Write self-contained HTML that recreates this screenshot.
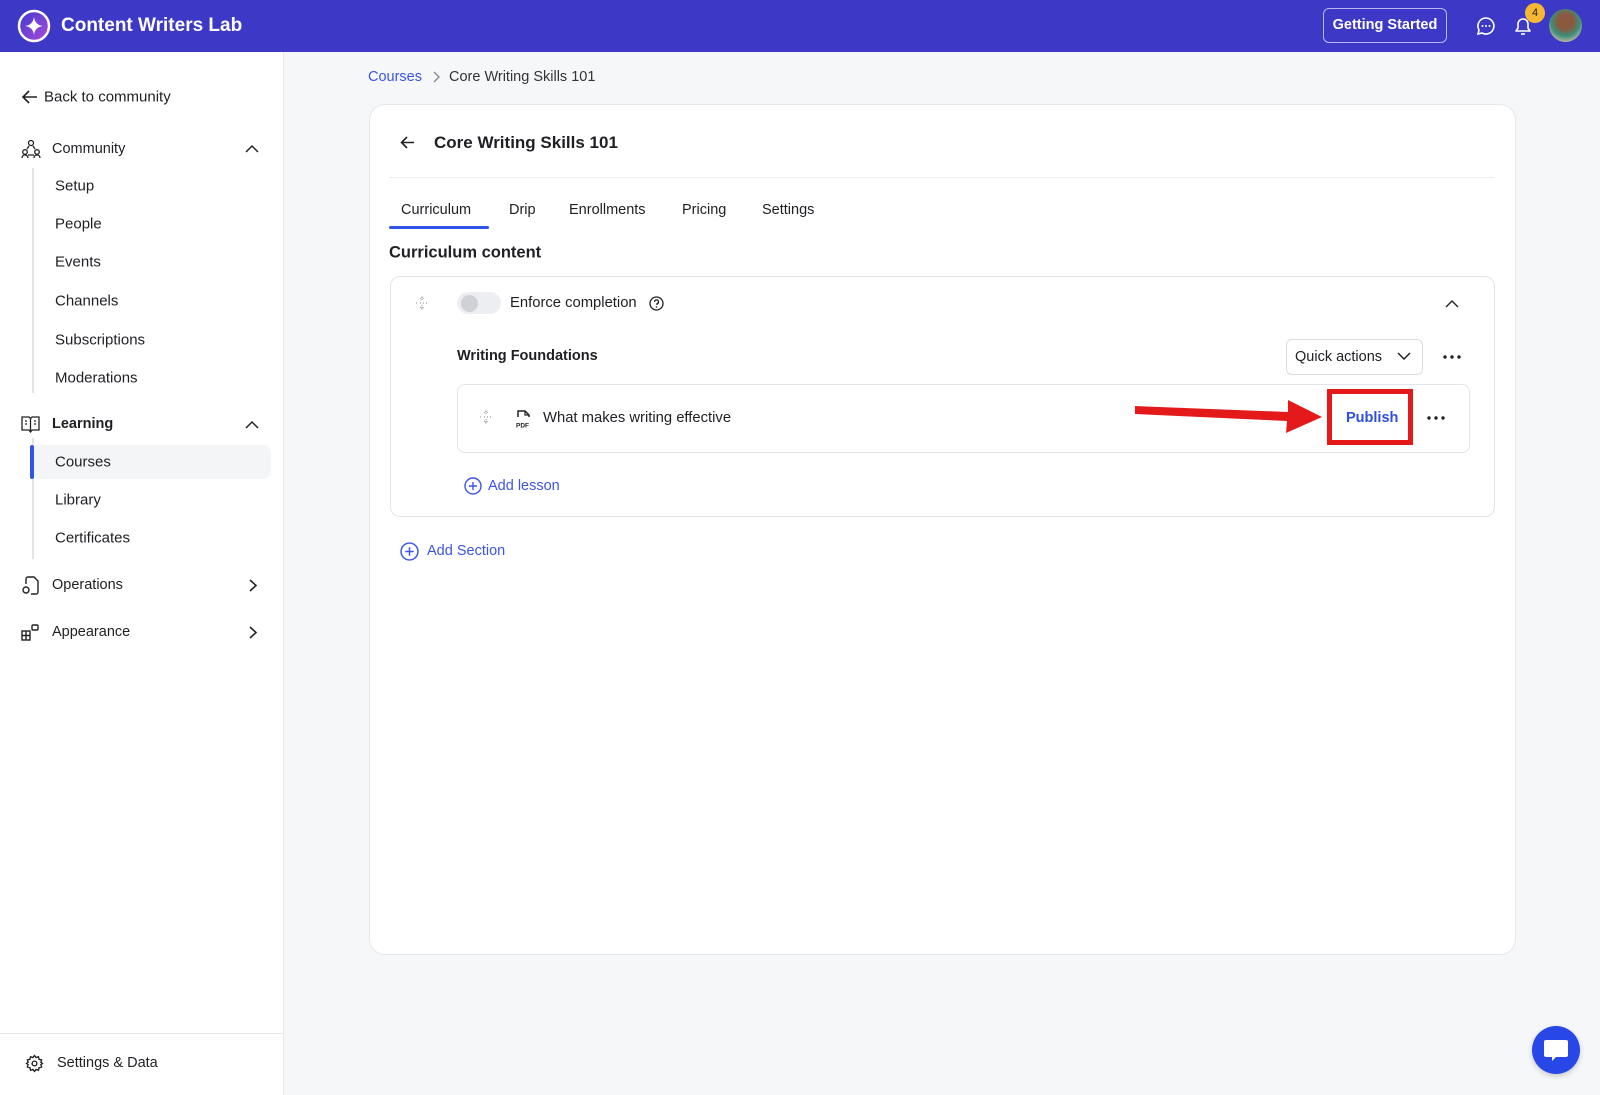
<!DOCTYPE html>
<html><head><meta charset="utf-8"><style>
*{box-sizing:border-box;margin:0;padding:0}
body{width:1600px;height:1095px;background:#f6f7f9;font-family:"Liberation Sans",sans-serif;color:#1f1f24;position:relative;overflow:hidden;font-size:15px}
.a{position:absolute;white-space:nowrap}
.hdr{left:0;top:0;width:1600px;height:52px;background:#3d39c6}
.side{left:0;top:52px;width:284px;height:1043px;background:#fff;border-right:1px solid #e6e7eb}
.t{transform:translateY(-50%)}
.blue{color:#3b55e6}
svg{position:absolute;overflow:visible}
</style></head><body>
<div class="a hdr"></div>
<svg style="left:17px;top:9px" width="34" height="34" viewBox="0 0 34 34"><defs><linearGradient id="g" x1="0" y1="0" x2="1" y2="1"><stop offset="0" stop-color="#3b3ad0"/><stop offset="1" stop-color="#b04ad8"/></linearGradient></defs><circle cx="17" cy="17" r="15" fill="url(#g)" stroke="#fff" stroke-width="2.5"/><path d="M17 8 Q18 16 26 17 Q18 18 17 26 Q16 18 8 17 Q16 16 17 8Z" fill="#fff"/></svg>
<div class="a t" style="left:61px;top:26px;color:#fff;font-size:19px;font-weight:bold">Content Writers Lab</div>
<div class="a" style="left:1323px;top:8px;width:124px;height:35px;border:1px solid #b9b6f0;border-radius:6px;color:#fff;font-size:14.5px;font-weight:bold;text-align:center;line-height:33px">Getting Started</div>
<svg style="left:1476px;top:16px" width="20" height="20" viewBox="0 0 20 20"><path d="M10 2a8 8 0 1 1-4 15l-4 1 1-4A8 8 0 0 1 10 2z" fill="none" stroke="#fff" stroke-width="1.6"/><circle cx="6.5" cy="10" r="1" fill="#fff"/><circle cx="10" cy="10" r="1" fill="#fff"/><circle cx="13.5" cy="10" r="1" fill="#fff"/></svg>
<svg style="left:1513px;top:15px" width="20" height="22" viewBox="0 0 20 22"><path d="M3 16h14l-2-3V9a5 5 0 0 0-10 0v4z" fill="none" stroke="#fff" stroke-width="1.6" stroke-linejoin="round"/><path d="M8 19h4" stroke="#fff" stroke-width="1.6"/></svg>
<div class="a" style="left:1525px;top:3px;width:20px;height:20px;border-radius:50%;background:#f7b733;color:#222;font-size:11px;text-align:center;line-height:20px">4</div>
<div class="a" style="left:1549px;top:9px;width:33px;height:33px;border-radius:50%;background:radial-gradient(circle at 50% 38%,#8a5a40 0 30%,#3a8f7a 55%,#c9b7a3 80%)"></div>

<div class="a side"></div>
<svg style="left:22px;top:90px" width="16" height="14" viewBox="0 0 16 14"><path d="M15 7H2M7 1 1 7l6 6" fill="none" stroke="#222" stroke-width="1.6"/></svg>
<div class="a t" style="left:44px;top:97px">Back to community</div>
<svg style="left:21px;top:139px" width="20" height="20" viewBox="0 0 20 20" fill="none" stroke="#222" stroke-width="1.3"><circle cx="10" cy="4" r="2.5"/><circle cx="4" cy="13" r="2.3"/><circle cx="16" cy="13" r="2.3"/><path d="M1 19c0-2 1.5-3 3-3s3 1 3 3M13 19c0-2 1.5-3 3-3s3 1 3 3M6 10l2-3M14 10l-2-3M7 16h6"/></svg>
<div class="a t" style="left:52px;top:149px;font-size:14.5px">Community</div>
<svg style="left:245px;top:145px" width="14" height="8" viewBox="0 0 14 8"><path d="M1 7l6-6 6 6" fill="none" stroke="#222" stroke-width="1.5"/></svg>
<div class="a" style="left:32px;top:168px;width:2px;height:225px;background:#e3e3e6"></div>
<div class="a t" style="left:55px;top:186px">Setup</div>
<div class="a t" style="left:55px;top:224px">People</div>
<div class="a t" style="left:55px;top:262px">Events</div>
<div class="a t" style="left:55px;top:301px">Channels</div>
<div class="a t" style="left:55px;top:340px">Subscriptions</div>
<div class="a t" style="left:55px;top:378px">Moderations</div>
<svg style="left:21px;top:416px" width="19" height="17" viewBox="0 0 19 17" fill="none" stroke="#222" stroke-width="1.3"><path d="M1 1h7l1.5 1.5L11 1h7v13h-7l-1.5 2L8 14H1z"/><path d="M9.5 2.5V15M4 5h2M4 8h2M13 5h2M13 8h2"/></svg>
<div class="a t" style="left:52px;top:424px;font-weight:bold;font-size:14.5px">Learning</div>
<svg style="left:245px;top:421px" width="14" height="8" viewBox="0 0 14 8"><path d="M1 7l6-6 6 6" fill="none" stroke="#222" stroke-width="1.5"/></svg>
<div class="a" style="left:32px;top:438px;width:2px;height:121px;background:#e3e3e6"></div>
<div class="a" style="left:32px;top:445px;width:239px;height:34px;background:#f4f5f7;border-radius:0 8px 8px 0"></div>
<div class="a" style="left:30px;top:445px;width:4px;height:34px;background:#2f55e8;border-radius:2px"></div>
<div class="a t" style="left:55px;top:462px">Courses</div>
<div class="a t" style="left:55px;top:500px">Library</div>
<div class="a t" style="left:55px;top:538px">Certificates</div>
<svg style="left:21px;top:576px" width="18" height="19" viewBox="0 0 18 19" fill="none" stroke="#222" stroke-width="1.4"><path d="M5 8V3a2 2 0 0 1 2-2h6l4 4v11a2 2 0 0 1-2 2H10"/><circle cx="5" cy="14" r="3"/></svg>
<div class="a t" style="left:52px;top:585px;font-size:14.5px">Operations</div>
<svg style="left:249px;top:579px" width="8" height="13" viewBox="0 0 8 13"><path d="M1 1l6 5.5L1 12" fill="none" stroke="#222" stroke-width="1.6"/></svg>
<svg style="left:21px;top:623px" width="18" height="18" viewBox="0 0 18 18" fill="none" stroke="#222" stroke-width="1.4"><rect x="1" y="8" width="8" height="9"/><path d="M1 12.5h8M5 8v9"/><rect x="11" y="2" width="6" height="5" rx="1"/></svg>
<div class="a t" style="left:52px;top:632px;font-size:14.5px">Appearance</div>
<svg style="left:249px;top:626px" width="8" height="13" viewBox="0 0 8 13"><path d="M1 1l6 5.5L1 12" fill="none" stroke="#222" stroke-width="1.6"/></svg>
<div class="a" style="left:0;top:1033px;width:284px;height:1px;background:#e6e7eb"></div>
<svg style="left:25px;top:1054px" width="19" height="19" viewBox="0 0 24 24" fill="none" stroke="#222" stroke-width="1.7"><circle cx="12" cy="12" r="3"/><path d="M12 2l2 2.5 3-1 .8 3.2 3.2.8-1 3L22 12l-2 1.5 1 3-3.2.8-.8 3.2-3-1L12 22l-2-2.5-3 1-.8-3.2L3 16.5l1-3L2 12l2-1.5-1-3 3.2-.8L7 3.5l3 1z"/></svg>
<div class="a t" style="left:57px;top:1063px;font-size:14.5px">Settings &amp; Data</div>

<div class="a t blue" style="left:368px;top:77px;font-size:14.5px">Courses</div>
<svg style="left:433px;top:71px" width="7" height="12" viewBox="0 0 7 12"><path d="M1 1l5 5-5 5" fill="none" stroke="#888" stroke-width="1.3"/></svg>
<div class="a t" style="left:449px;top:77px;font-size:14.5px;color:#333">Core Writing Skills 101</div>

<div class="a" style="left:369px;top:104px;width:1147px;height:851px;background:#fff;border:1px solid #e6e7eb;border-radius:16px"></div>
<svg style="left:400px;top:136px" width="15" height="13" viewBox="0 0 15 13"><path d="M14 6.5H2M7 1 1.5 6.5 7 12" fill="none" stroke="#222" stroke-width="1.6"/></svg>
<div class="a t" style="left:434px;top:143px;font-size:17px;font-weight:bold">Core Writing Skills 101</div>
<div class="a" style="left:389px;top:177px;width:1106px;height:1px;background:#ececef"></div>
<div class="a t" style="left:401px;top:210px;font-size:14.5px">Curriculum</div>
<div class="a t" style="left:509px;top:210px;font-size:14.5px">Drip</div>
<div class="a t" style="left:569px;top:210px;font-size:14.5px">Enrollments</div>
<div class="a t" style="left:682px;top:210px;font-size:14.5px">Pricing</div>
<div class="a t" style="left:762px;top:210px;font-size:14.5px">Settings</div>
<div class="a" style="left:389px;top:226px;width:100px;height:3px;background:#2f55e8;border-radius:2px"></div>
<div class="a t" style="left:389px;top:253px;font-size:16.5px;font-weight:bold">Curriculum content</div>

<div class="a" style="left:390px;top:276px;width:1105px;height:241px;border:1px solid #e3e4e8;border-radius:10px"></div>
<svg style="left:415px;top:296px" width="14" height="14" viewBox="0 0 14 14" fill="none" stroke="#888" stroke-width="1"><path d="M7 1v4M5 3l2-2 2 2M7 9v4M5 11l2 2 2-2M1 7h2M5 7h1M8 7h1M11 7h2" stroke-dasharray="1 1"/></svg>
<div class="a" style="left:457px;top:292px;width:44px;height:22px;border-radius:11px;background:#eceef2"></div>
<div class="a" style="left:461px;top:295px;width:17px;height:17px;border-radius:50%;background:#cfd1d7"></div>
<div class="a t" style="left:510px;top:303px;font-size:14.8px">Enforce completion</div>
<svg style="left:649px;top:296px" width="15" height="15" viewBox="0 0 15 15"><circle cx="7.5" cy="7.5" r="6.5" fill="none" stroke="#222" stroke-width="1.3"/><path d="M5.5 5.8a2 2 0 1 1 2.5 2V9" fill="none" stroke="#222" stroke-width="1.3"/><circle cx="7.5" cy="11" r=".8" fill="#222"/></svg>
<svg style="left:1445px;top:300px" width="14" height="8" viewBox="0 0 14 8"><path d="M1 7l6-6 6 6" fill="none" stroke="#222" stroke-width="1.4"/></svg>
<div class="a t" style="left:457px;top:356px;font-size:14.5px;font-weight:bold">Writing Foundations</div>
<div class="a" style="left:1286px;top:339px;width:137px;height:36px;border:1px solid #dcdde2;border-radius:6px"></div>
<div class="a t" style="left:1295px;top:357px;font-size:14.5px">Quick actions</div>
<svg style="left:1397px;top:352px" width="14" height="8" viewBox="0 0 14 8"><path d="M1 1l6 6 6-6" fill="none" stroke="#222" stroke-width="1.5"/></svg>
<svg style="left:1443px;top:355px" width="18" height="4" viewBox="0 0 18 4" fill="#222"><circle cx="2" cy="2" r="1.7"/><circle cx="9" cy="2" r="1.7"/><circle cx="16" cy="2" r="1.7"/></svg>
<div class="a" style="left:457px;top:384px;width:1013px;height:69px;border:1px solid #e3e4e8;border-radius:8px"></div>
<svg style="left:479px;top:410px" width="14" height="14" viewBox="0 0 14 14" fill="none" stroke="#888" stroke-width="1"><path d="M7 1v4M5 3l2-2 2 2M7 9v4M5 11l2 2 2-2M1 7h2M5 7h1M8 7h1M11 7h2" stroke-dasharray="1 1"/></svg>
<svg style="left:516px;top:409px" width="16" height="19" viewBox="0 0 16 19"><path d="M2 8V2h7l4 4v2" fill="none" stroke="#222" stroke-width="1.5"/><path d="M9 2v4h4" fill="none" stroke="#222" stroke-width="1.2"/><text x="0" y="18.5" font-size="6.5" font-weight="bold" font-family="Liberation Sans" fill="#222">PDF</text></svg>
<div class="a t" style="left:543px;top:418px;font-size:14.8px">What makes writing effective</div>
<svg style="left:1134px;top:398px" width="192" height="36" viewBox="0 0 192 36"><path d="M1 8 L154 14 L154 2 L188 19 L152 35 L153 23 L1 16Z" fill="#e41a1a"/></svg>
<div class="a" style="left:1327px;top:389px;width:86px;height:56px;border:5px solid #e41a1a;background:#fff"></div>
<div class="a t" style="left:1346px;top:418px;font-size:14.5px;font-weight:bold;color:#2f4fe0">Publish</div>
<svg style="left:1427px;top:416px" width="18" height="4" viewBox="0 0 18 4" fill="#222"><circle cx="2" cy="2" r="1.7"/><circle cx="9" cy="2" r="1.7"/><circle cx="16" cy="2" r="1.7"/></svg>
<svg style="left:464px;top:477px" width="18" height="18" viewBox="0 0 18 18" fill="none" stroke="#3b55e6" stroke-width="1.4"><circle cx="9" cy="9" r="8"/><path d="M9 5v8M5 9h8"/></svg>
<div class="a t blue" style="left:488px;top:486px;font-size:14.5px">Add lesson</div>
<svg style="left:400px;top:542px" width="19" height="19" viewBox="0 0 18 18" fill="none" stroke="#3b55e6" stroke-width="1.4"><circle cx="9" cy="9" r="8"/><path d="M9 5v8M5 9h8"/></svg>
<div class="a t blue" style="left:427px;top:551px;font-size:14.5px">Add Section</div>

<div class="a" style="left:1532px;top:1026px;width:48px;height:48px;border-radius:50%;background:#2747e6;box-shadow:0 2px 6px rgba(0,0,0,.2)"></div>
<svg style="left:1543px;top:1039px" width="26" height="24" viewBox="0 0 26 24"><path d="M3 1h20a2 2 0 0 1 2 2v13a2 2 0 0 1-2 2H13l-4 4v-4H3a2 2 0 0 1-2-2V3a2 2 0 0 1 2-2z" fill="#fff"/></svg>
</body></html>
